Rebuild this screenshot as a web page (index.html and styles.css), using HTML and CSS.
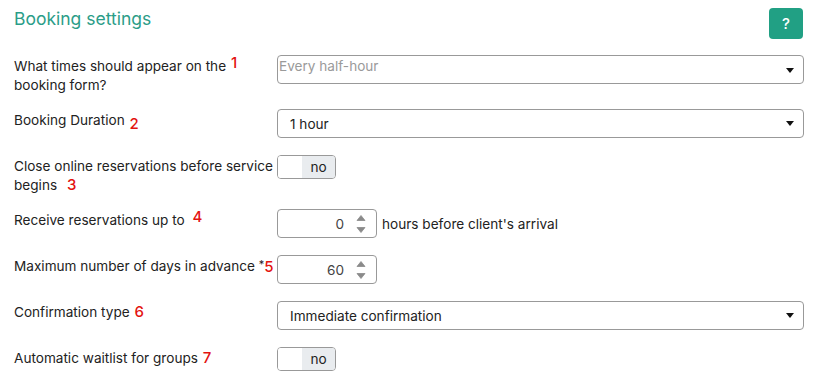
FILE: index.html
```html
<!DOCTYPE html>
<html lang="en">
<head>
  <meta charset="UTF-8" />
  <title>Booking settings</title>
  <link rel="stylesheet" href="styles.css">
</head>
<body>
  <div class="page">
    <div class="header">
      <h1 class="title">Booking settings</h1>
      <button class="help-btn">?</button>
    </div>

    <div class="row">
      <label class="label">What times should appear on the <span class="mark mark-1">1</span> booking form?</label>
      <div class="select placeholder"><span>Every half-hour</span><span class="caret"></span></div>
    </div>

    <div class="row">
      <label class="label">Booking Duration <span class="mark mark-low">2</span></label>
      <div class="select"><span>1 hour</span><span class="caret"></span></div>
    </div>

    <div class="row">
      <label class="label">Close online reservations before service begins <span class="mark mark-3">3</span></label>
      <div class="toggle"><span class="toggle-off"></span><span class="toggle-on">no</span></div>
    </div>

    <div class="row">
      <label class="label">Receive reservations up to <span class="mark mark-4">4</span></label>
      <div class="inline">
        <div class="number"><span class="number-val">0</span><span class="spin"><svg width="10" height="20" viewBox="0 0 10 20"><path d="M5 1.5 L9 6.5 H1 Z" fill="#8a8a8a" stroke="#8a8a8a" stroke-width="0.8" stroke-linejoin="round"/><path d="M5 18.5 L9 13.5 H1 Z" fill="#8a8a8a" stroke="#8a8a8a" stroke-width="0.8" stroke-linejoin="round"/></svg></span></div>
        <span class="suffix">hours before client's arrival</span>
      </div>
    </div>

    <div class="row">
      <label class="label label-req">Maximum number of days in advance <span class="req">*</span><span class="mark mark-5">5</span></label>
      <div class="number"><span class="number-val">60</span><span class="spin"><svg width="10" height="20" viewBox="0 0 10 20"><path d="M5 1.5 L9 6.5 H1 Z" fill="#8a8a8a" stroke="#8a8a8a" stroke-width="0.8" stroke-linejoin="round"/><path d="M5 18.5 L9 13.5 H1 Z" fill="#8a8a8a" stroke="#8a8a8a" stroke-width="0.8" stroke-linejoin="round"/></svg></span></div>
    </div>

    <div class="row">
      <label class="label">Confirmation type <span class="mark">6</span></label>
      <div class="select"><span>Immediate confirmation</span><span class="caret"></span></div>
    </div>

    <div class="row">
      <label class="label">Automatic waitlist for groups <span class="mark">7</span></label>
      <div class="toggle"><span class="toggle-off"></span><span class="toggle-on">no</span></div>
    </div>
  </div>
</body>
</html>
```

FILE: styles.css
```css
* { margin: 0; padding: 0; box-sizing: border-box; }
body {
  font-family: Inter, "Noto Sans", Arial, sans-serif;
  font-size: 13.6px;
  color: #222;
  background: #fff;
}
.page { padding: 8px 13px 0 14px; }
.header {
  display: flex;
  justify-content: space-between;
  align-items: flex-start;
  margin-bottom: 16px;
}
.title {
  font-size: 17.5px;
  font-weight: 400;
  line-height: 22px;
  color: #2b9d88;
}
.help-btn {
  width: 34px; height: 31px;
  margin-right: 1px;
  border: none; border-radius: 4px;
  background: #21a084; color: #fff;
  font-family: inherit; font-size: 15px; font-weight: 500;
}
.row {
  display: grid;
  grid-template-columns: 263px 1fr;
  align-items: start;
  margin-bottom: 17px;
}
.label {
  line-height: 19px;
  padding-top: 2px;
  margin-bottom: -3px;
}
.label-req { white-space: nowrap; }

/* red annotation numbers */
.mark {
  position: relative;
  color: #e3130f;
  font-size: 15px;
  font-weight: 500;
  line-height: 1;
  margin-left: 1px;
}
.mark-1 { top: -3px; }
.mark-low { top: 4px; }
.mark-3 { margin-left: 6px; }
.mark-4 { margin-left: 4px; top: -3px; }
.mark-5 { margin-left: 0; top: 1px; }
.req {
  position: relative; top: -3px;
  margin-left: 0; font-size: 11px; line-height: 1; color: #222;
}

.select {
  height: 29px;
  border: 1px solid #999;
  border-radius: 4px;
  display: flex;
  align-items: center;
  justify-content: space-between;
  padding: 0 9px 0 12px;
}
.select.placeholder { padding-left: 1px; align-items: flex-start; padding-top: 2px; color: #9a9a9a; }
.select.placeholder .caret { margin-top: 10px; }
.caret {
  width: 0; height: 0;
  border-left: 4px solid transparent;
  border-right: 4px solid transparent;
  border-top: 5px solid #111;
}
.toggle {
  width: 59px; height: 24px;
  border: 1px solid #999;
  border-radius: 4px;
  display: flex;
  overflow: hidden;
}
.toggle-off { width: 24px; background: #fff; }
.toggle-on {
  flex: 1;
  background: #e9ecef;
  display: flex; align-items: center; justify-content: center;
}
.inline { display: flex; align-items: center; gap: 5px; }
.number {
  width: 100px; height: 29px;
  border: 1px solid #999;
  border-radius: 4px;
  display: flex;
  align-items: center;
  justify-content: flex-end;
  padding-right: 10px;
  gap: 12px;
}
.number-val { color: #444; }
.spin { display: flex; }
```
